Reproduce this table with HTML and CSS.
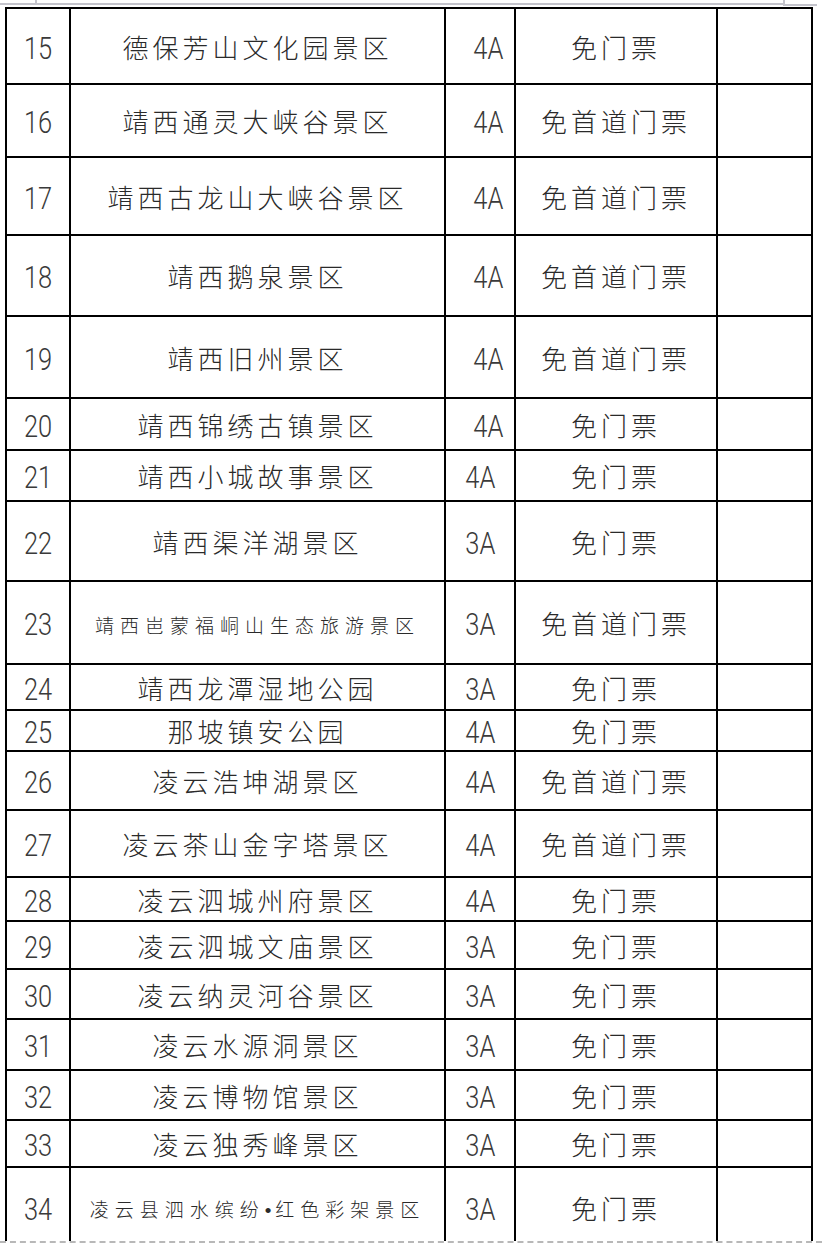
FILE: index.html
```html
<!DOCTYPE html>
<html lang="zh-CN">
<head>
<meta charset="utf-8">
<title>景区门票表</title>
<link rel="stylesheet" href="styles.css">
</head>
<body>
<div class="sheet">
  <div class="top-strip">
    <span class="tick"></span>
    <div class="rule"></div>
    <div class="corner"></div>
  </div>
  <div class="clip">
    <table class="grid">
      <colgroup>
        <col class="w-no"><col class="w-name"><col class="w-grade"><col class="w-ticket"><col class="w-note">
      </colgroup>
      <tbody>
        <tr class="h76"><td class="c-no"><span class="num">15</span></td><td><span class="name">德保芳山文化园景区</span></td><td class="c-grade shift"><span class="num">4A</span></td><td><span class="name">免门票</span></td><td></td></tr>
        <tr class="h73"><td class="c-no"><span class="num">16</span></td><td><span class="name">靖西通灵大峡谷景区</span></td><td class="c-grade shift"><span class="num">4A</span></td><td><span class="name">免首道门票</span></td><td></td></tr>
        <tr class="h78"><td class="c-no"><span class="num">17</span></td><td><span class="name">靖西古龙山大峡谷景区</span></td><td class="c-grade shift"><span class="num">4A</span></td><td><span class="name">免首道门票</span></td><td></td></tr>
        <tr class="h81"><td class="c-no"><span class="num">18</span></td><td><span class="name">靖西鹅泉景区</span></td><td class="c-grade shift"><span class="num">4A</span></td><td><span class="name">免首道门票</span></td><td></td></tr>
        <tr class="h82"><td class="c-no"><span class="num">19</span></td><td><span class="name">靖西旧州景区</span></td><td class="c-grade shift"><span class="num">4A</span></td><td><span class="name">免首道门票</span></td><td></td></tr>
        <tr class="h52"><td class="c-no"><span class="num">20</span></td><td><span class="name">靖西锦绣古镇景区</span></td><td class="c-grade shift"><span class="num">4A</span></td><td><span class="name">免门票</span></td><td></td></tr>
        <tr class="h51"><td class="c-no"><span class="num">21</span></td><td><span class="name">靖西小城故事景区</span></td><td class="c-grade"><span class="num">4A</span></td><td><span class="name">免门票</span></td><td></td></tr>
        <tr class="h80"><td class="c-no"><span class="num">22</span></td><td><span class="name">靖西渠洋湖景区</span></td><td class="c-grade"><span class="num">3A</span></td><td><span class="name">免门票</span></td><td></td></tr>
        <tr class="h83"><td class="c-no"><span class="num">23</span></td><td><span class="name small">靖西岜蒙福峒山生态旅游景区</span></td><td class="c-grade"><span class="num">3A</span></td><td><span class="name">免首道门票</span></td><td></td></tr>
        <tr class="h46"><td class="c-no"><span class="num">24</span></td><td><span class="name">靖西龙潭湿地公园</span></td><td class="c-grade"><span class="num">3A</span></td><td><span class="name">免门票</span></td><td></td></tr>
        <tr class="h41"><td class="c-no"><span class="num">25</span></td><td><span class="name">那坡镇安公园</span></td><td class="c-grade"><span class="num">4A</span></td><td><span class="name">免门票</span></td><td></td></tr>
        <tr class="h59"><td class="c-no"><span class="num">26</span></td><td><span class="name">凌云浩坤湖景区</span></td><td class="c-grade"><span class="num">4A</span></td><td><span class="name">免首道门票</span></td><td></td></tr>
        <tr class="h67"><td class="c-no"><span class="num">27</span></td><td><span class="name">凌云茶山金字塔景区</span></td><td class="c-grade"><span class="num">4A</span></td><td><span class="name">免首道门票</span></td><td></td></tr>
        <tr class="h44"><td class="c-no"><span class="num">28</span></td><td><span class="name">凌云泗城州府景区</span></td><td class="c-grade"><span class="num">4A</span></td><td><span class="name">免门票</span></td><td></td></tr>
        <tr class="h48"><td class="c-no"><span class="num">29</span></td><td><span class="name">凌云泗城文庙景区</span></td><td class="c-grade"><span class="num">3A</span></td><td><span class="name">免门票</span></td><td></td></tr>
        <tr class="h50"><td class="c-no"><span class="num">30</span></td><td><span class="name">凌云纳灵河谷景区</span></td><td class="c-grade"><span class="num">3A</span></td><td><span class="name">免门票</span></td><td></td></tr>
        <tr class="h51"><td class="c-no"><span class="num">31</span></td><td><span class="name">凌云水源洞景区</span></td><td class="c-grade"><span class="num">3A</span></td><td><span class="name">免门票</span></td><td></td></tr>
        <tr class="h50"><td class="c-no"><span class="num">32</span></td><td><span class="name">凌云博物馆景区</span></td><td class="c-grade"><span class="num">3A</span></td><td><span class="name">免门票</span></td><td></td></tr>
        <tr class="h47"><td class="c-no"><span class="num">33</span></td><td><span class="name">凌云独秀峰景区</span></td><td class="c-grade"><span class="num">3A</span></td><td><span class="name">免门票</span></td><td></td></tr>
        <tr class="h80"><td class="c-no"><span class="num">34</span></td><td><span class="name small">凌云县泗水缤纷<span class="dot">•</span>红色彩架景区</span></td><td class="c-grade"><span class="num">3A</span></td><td><span class="name">免门票</span></td><td></td></tr>
      </tbody>
    </table>
  </div>
  <div class="page-end"></div>
</div>
</body>
</html>
```

FILE: styles.css
```css
html, body {
  margin: 0;
  padding: 0;
  background: #ffffff;
}

.sheet {
  width: 822px;
  height: 1252px;
  overflow: hidden;
}

/* page boundary marks at the top */
.top-strip {
  position: relative;
  height: 7px;
  display: flex;
  align-items: flex-start;
}
.rule {
  width: 783px;
  margin-top: 3px;
  border-top: 2px solid #c4c4cc;
}
.corner {
  width: 32px;
  height: 4px;
  border-left: 2px solid #c4c4cc;
  border-bottom: 2px solid #c4c4cc;
}
.tick {
  position: absolute;
  left: 35px;
  top: 0;
  width: 2px;
  height: 4px;
  background: #c4c4cc;
}

.clip {
  height: 1234px;
  overflow: hidden;
  padding-left: 5px;
}

.grid {
  border-collapse: collapse;
  table-layout: fixed;
  width: 808px;
}
.w-no { width: 64px; }
.w-name { width: 375px; }
.w-grade { width: 70px; }
.w-ticket { width: 202px; }
.w-note { width: 95px; }

.grid td {
  border: 2px solid #000;
  padding: 0;
  vertical-align: middle;
  text-align: center;
  color: #1a1a1a;
  line-height: 20px;
}

.c-no {
  text-align: left;
  padding-left: 6px !important;
}
.c-grade.shift {
  padding-left: 16px !important;
}

.num {
  display: inline-block;
  font-family: Roboto, "Liberation Sans", sans-serif;
  font-weight: 300;
  font-size: 31px;
  line-height: 18px;
  color: #3a3a3a;
  transform: scaleX(0.82);
  transform-origin: left center;
  padding-top: 11px;
}
.c-grade .num {
  transform-origin: center center;
}

.name {
  display: inline-block;
  font-family: "Noto Sans CJK SC", "Noto Sans CJK JP", sans-serif;
  font-weight: 300;
  font-size: 26px;
  letter-spacing: 4px;
  line-height: 20px;
  color: #2a2a2a;
  padding-top: 7px;
}
.name.small {
  font-size: 19px;
  letter-spacing: 6px;
}
.dot {
  font-family: "Liberation Sans", sans-serif;
  letter-spacing: 4px;
}

.h41 { height: 41px; }
.h44 { height: 44px; }
.h46 { height: 46px; }
.h47 { height: 47px; }
.h48 { height: 48px; }
.h50 { height: 50px; }
.h51 { height: 51px; }
.h52 { height: 52px; }
.h59 { height: 59px; }
.h67 { height: 67px; }
.h73 { height: 73px; }
.h76 { height: 76px; }
.h78 { height: 78px; }
.h80 { height: 80px; }
.h81 { height: 81px; }
.h82 { height: 82px; }
.h83 { height: 83px; }

.page-end {
  height: 11px;
  border-top: 2px dashed #b8b8b8;
  background: #ffffff;
}
```
